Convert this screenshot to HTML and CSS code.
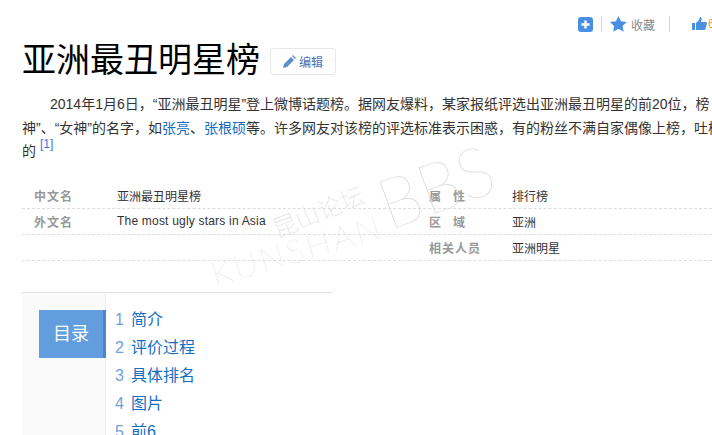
FILE: index.html
```html
<!DOCTYPE html>
<html lang="zh">
<head>
<meta charset="utf-8">
<title>亚洲最丑明星榜</title>
<link rel="stylesheet" href="styles.css">
</head>
<body>
<div class="page">
  <div class="tools">
    <span class="add"><svg width="15" height="15" viewBox="0 0 15 15"><rect width="15" height="15" rx="3" fill="#4a90e2"/><path d="M7.500 3.500v8M3.500 7.500h8" stroke="#fff" stroke-width="2.400"/></svg></span>
    <span class="sep"></span>
    <svg class="star" width="17" height="16" viewBox="0 0 17 16"><path d="M8.500 0l2.500 5.300 5.800.7-4.300 4 1.200 5.800-5.200-3-5.200 3L4 10 0 6l5.900-.7z" fill="#4a90e2"/></svg>
    <span class="fav">收藏</span>
    <span class="sep sep2"></span>
    <svg class="thumb" width="15" height="14" viewBox="0 0 15 14"><path d="M0 6h3v7H0zM4 6l3-3 1-3c2 0 2 2 1 5h5c1 0 1 1 .8 2l-1.300 5c-.2.700-.7 1-1.500 1H4z" fill="#4a90e2"/></svg>
    <span class="count">6</span>
  </div>
  <div class="head">
    <h1>亚洲最丑明星榜</h1>
    <a class="edit"><svg width="13" height="13" viewBox="0 0 13 13"><path d="M0 13l1-4 7-7 3 3-7 7zM9 1l1-1 3 3-1 1z" fill="#5a8fc9"/></svg>编辑</a>
  </div>
  <div class="para">
    <p class="l1">2014年1月6日，“亚洲最丑明星”登上微博话题榜。据网友爆料，某家报纸评选出亚洲最丑明星的前20位，榜</p>
    <p>神”、“女神”的名字，如<a>张亮</a>、<a>张根硕</a>等。许多网友对该榜的评选标准表示困惑，有的粉丝不满自家偶像上榜，吐槽</p>
    <p>的 <sup>[1]</sup></p>
  </div>
  <div class="basic">
    <div class="row"><div class="cell"><b>中文名</b><span>亚洲最丑明星榜</span></div><div class="cell"><b class="sp">属性</b><span>排行榜</span></div></div>
    <div class="row"><div class="cell"><b>外文名</b><span class="latin">The most ugly stars in Asia</span></div><div class="cell"><b class="sp">区域</b><span>亚洲</span></div></div>
    <div class="row"><div class="cell"><b></b><span></span></div><div class="cell"><b>相关人员</b><span>亚洲明星</span></div></div>
  </div>
  <div class="toc">
    <div class="side"><div class="title">目录</div></div>
    <ol class="list">
      <li><i>1</i><a>简介</a></li>
      <li><i>2</i><a>评价过程</a></li>
      <li><i>3</i><a>具体排名</a></li>
      <li><i>4</i><a>图片</a></li>
      <li><i>5</i><a>前6</a></li>
    </ol>
  </div>
  <div class="mark">
    <span class="kun">KUNSHAN</span>
    <span class="cn">昆山论坛</span>
    <span class="bbs">BBS</span>
  </div>
</div>
</body>
</html>
```
FILE: styles.css
```css
html, body { margin: 0; padding: 0; }
body { width: 712px; height: 435px; overflow: hidden; background: #fff; font-family: "Liberation Sans", "Noto Sans CJK SC", sans-serif; color: #333; }
.page { position: relative; width: 712px; height: 435px; overflow: hidden; padding-left: 22px; box-sizing: border-box; }
.tools { display: flex; align-items: center; height: 16px; padding-top: 16px; margin-left: 556px; width: 200px; white-space: nowrap; }
.add { display: flex; width: 15px; height: 15px; }
.sep { width: 1px; height: 16px; background: #d0d4d8; margin: 0 8px 0 8px; }
.star { margin-right: 4px; }
.fav { font-size: 12px; color: #888; }
.sep2 { margin: 0 22px 0 14px; }
.thumb { margin-right: 1px; }
.count { font-size: 12px; color: #e6a050; }
.head { display: flex; align-items: center; height: 40px; margin-top: 8px; }
h1 { margin: 0; font-size: 34px; font-weight: 400; color: #000; line-height: 40px; white-space: nowrap; }
.edit { display: flex; align-items: center; gap: 3px; box-sizing: border-box; width: 66px; height: 27px; margin: 2px 0 0 10px; padding-left: 12px; border: 1px solid #e6e8ec; border-radius: 3px; font-size: 12px; color: #3f74b8; }
.para { width: 720px; margin-top: 13px; font-size: 14px; line-height: 23.500px; color: #333; white-space: nowrap; }
.para p { margin: 0; }
.para .l1 { padding-left: 28px; }
.para a { color: #136ec2; }
.para sup { font-size: 12px; color: #3f74d8; line-height: 0; vertical-align: 8px; }
.basic { margin-top: 19px; width: 690px; font-size: 12px; }
.row { display: flex; height: 25px; border-bottom: 1px dashed #ddd; align-items: center; white-space: nowrap; }
.cell { display: flex; width: 395px; align-items: center; }
.cell b { width: 95px; padding-left: 12px; box-sizing: border-box; font-weight: 700; color: #999; letter-spacing: 1px; }
.cell + .cell { width: 295px; }
.cell + .cell b { padding-left: 12px; width: 95px; }
.cell + .cell b.sp { letter-spacing: 12px; }
.cell span { color: #333; }
.cell span.latin { letter-spacing: .2px; }
.toc { display: flex; margin-top: 31px; width: 310px; height: 150px; border-top: 1px solid #e2e2e2; }
.side { width: 83px; background: #fafafa; border-right: 1px solid #ececec; padding-top: 17px; }
.title { box-sizing: border-box; width: 67px; height: 48px; margin-left: 17px; background: #629ddd; border-right: 3px solid #4d87c9; color: #fff; font-size: 18px; line-height: 48px; text-align: center; }
.list { list-style: none; margin: 13px 0 0 9px; padding: 0; font-size: 16px; }
.list li { height: 28px; line-height: 28px; white-space: nowrap; display: flex; }
.list i { font-style: normal; color: #6f9fdc; width: 16px; }
.list a { color: #136ec2; }
.mark { position: absolute; left: 0; top: 0; width: 712px; height: 435px; pointer-events: none; color: #d8d8d8; font-family: "Lato", "Noto Sans CJK SC", sans-serif; font-weight: 100; }
.mark span { position: absolute; white-space: nowrap; line-height: 1; transform-origin: left bottom; }
.kun { left: 216px; top: 257px; font-size: 33px; letter-spacing: 3px; transform: rotate(-16deg); }
.cn { left: 278px; top: 216px; font-size: 24px; font-family: "Noto Sans CJK SC", sans-serif; font-weight: 100; transform: rotate(-22deg); color: #e2e2e2; }
.bbs { left: 392px; top: 168px; font-size: 70px; transform: rotate(-20deg) scaleX(.95); }
```
